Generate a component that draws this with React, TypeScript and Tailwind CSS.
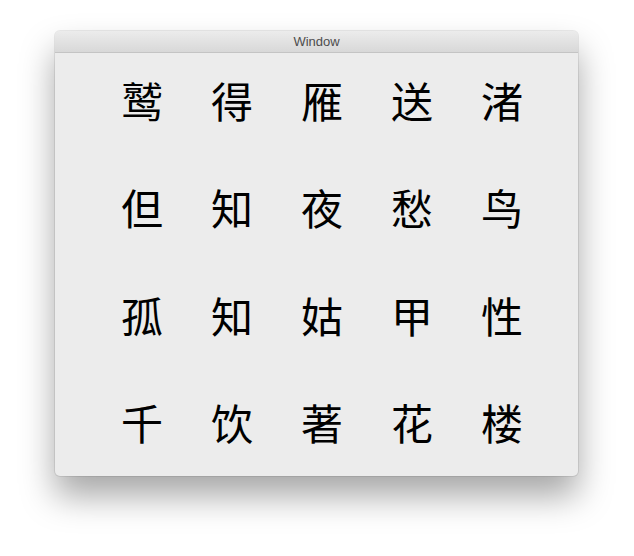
const ROWS = [
  ["鹫", "得", "雁", "送", "渚"],
  ["但", "知", "夜", "愁", "鸟"],
  ["孤", "知", "姑", "甲", "性"],
  ["千", "饮", "著", "花", "楼"],
];

export default function App() {
  return (
    <div className="h-[556px] w-[634px] bg-white pl-[55px] pt-[31px]">
      <div className="flex h-[445px] w-[523px] flex-col overflow-hidden rounded-[5px] bg-[#ececec] shadow-[0_20px_34px_rgba(0,0,0,0.35),0_0_0_1px_rgba(0,0,0,0.08)]">
        <div className="flex h-[22px] shrink-0 items-center justify-center border-b border-[#c4c4c4] bg-gradient-to-b from-[#ececec] to-[#d8d8d8] font-['Helvetica','Liberation_Sans',sans-serif] text-[13px] text-[#4d4d4d]">
          Window
        </div>
        <div className="grid grid-cols-[repeat(5,90px)] grid-rows-[repeat(4,93px)] gap-y-[14.5px] pl-[42px] font-['Noto_Sans_CJK_SC',sans-serif] text-[42px] text-black">
          {ROWS.flat().map((ch, i) => (
            <div key={i} className="flex items-center justify-center leading-none">
              {ch}
            </div>
          ))}
        </div>
      </div>
    </div>
  );
}
